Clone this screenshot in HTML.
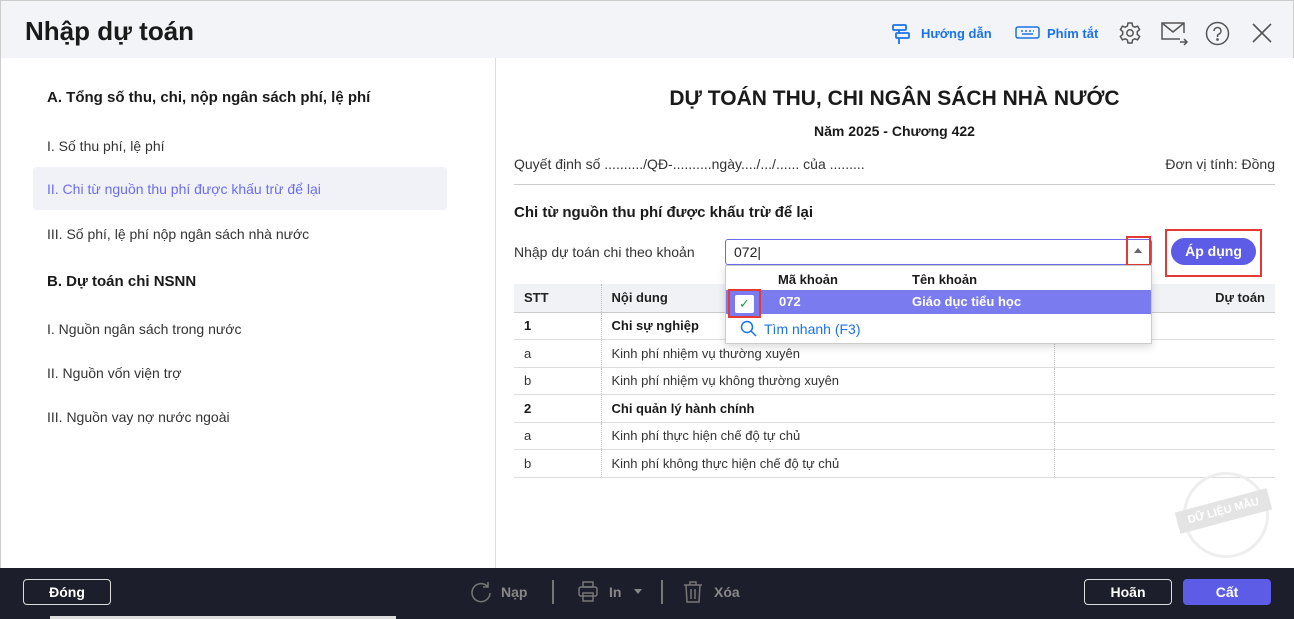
<!DOCTYPE html>
<html><head><meta charset="utf-8"><style>
*{box-sizing:border-box;margin:0;padding:0}
body{width:1294px;height:619px;overflow:hidden;font-family:"Liberation Sans",sans-serif;color:#222;background:#fff;position:relative;font-size:14px}
.abs{position:absolute}
.top{left:0;top:0;width:1294px;height:58px;background:#f3f4f8;border:1px solid #ccc;border-bottom:none}
.title{left:25px;top:16px;font-size:26px;font-weight:bold;color:#1a1a1a}
.blue{color:#1a73e8;font-size:13px;font-weight:bold}
.left{left:0;top:58px;width:496px;height:510px;border-right:1px solid #ddd;border-left:1px solid #ccc}
.li{position:absolute;left:47px;font-size:15px;color:#333}
.b{font-weight:bold;color:#1a1a1a}
.sel{left:33px;top:167px;width:414px;height:43px;background:#f1f2f8;border-radius:4px}
table{border-collapse:collapse;position:absolute;left:514px;top:284px;width:761px;font-size:13px}
td{height:27.5px;padding-left:10px;border-bottom:1px solid #ddd;color:#333}
th{height:28px;background:#f1f2f6;text-align:left;padding-left:10px;font-weight:bold;border-bottom:1px solid #ccc}
td:nth-child(2),th:nth-child(2){border-left:1px dotted #bbb}
td:nth-child(3),th:nth-child(3){border-left:1px dotted #bbb}
tr.bd td{font-weight:bold;color:#1a1a1a}
.bottom{left:0;top:568px;width:1294px;height:51px;background:#1c1e2b}
.btn{position:absolute;height:26px;border:1px solid #ddd;border-radius:4px;color:#fff;font-weight:bold;font-size:14px;text-align:center;line-height:24px}
.grey{color:#888;font-weight:bold;font-size:14px}
</style></head><body>
<div class="abs top"></div>
<div class="abs title">Nhập dự toán</div>
<svg class="abs" style="left:891px;top:23px" width="20" height="22" viewBox="0 0 20 22" fill="none" stroke="#1a73e8" stroke-width="1.8"><rect x="2" y="2" width="13" height="5" rx="1"/><rect x="5" y="10" width="13" height="5" rx="1"/><path d="M8 15v6M8 7v3"/></svg>
<div class="abs blue" style="left:921px;top:26px">Hướng dẫn</div>
<svg class="abs" style="left:1015px;top:26px" width="25" height="13" viewBox="0 0 25 13" fill="none" stroke="#1a73e8" stroke-width="1.5"><rect x="1" y="1" width="23" height="11" rx="2"/><path d="M6 5h2M10 5h2M14 5h2M18 5h1M7 8h11"/></svg>
<div class="abs blue" style="left:1047px;top:26px">Phím tắt</div>
<svg class="abs" style="left:1118px;top:21px" width="24" height="24" viewBox="0 0 24 24" fill="none" stroke="#555" stroke-width="1.5"><circle cx="12" cy="12" r="3.2"/><path d="M10 2h4l.6 3 2.2 1.2 2.8-1 2 3.4-2.3 2v2.8l2.3 2-2 3.4-2.8-1-2.2 1.2-.6 3h-4l-.6-3-2.2-1.2-2.8 1-2-3.4 2.3-2v-2.8l-2.3-2 2-3.4 2.8 1 2.2-1.2z"/></svg>
<svg class="abs" style="left:1161px;top:22px" width="28" height="24" viewBox="0 0 28 24" fill="none" stroke="#555" stroke-width="1.5"><path d="M19 17H1V1h22v10"/><path d="M1 1l11 9 11-9"/><path d="M19 20h7M23 17l3 3-3 3"/></svg>
<svg class="abs" style="left:1205px;top:21px" width="25" height="25" viewBox="0 0 25 25" fill="none" stroke="#555" stroke-width="1.5"><circle cx="12.5" cy="12.5" r="11"/><path d="M9 10a3.5 3.5 0 1 1 4.5 3.3c-.8.3-1 .8-1 1.7v1"/><circle cx="12.5" cy="18.5" r=".6" fill="#555"/></svg>
<svg class="abs" style="left:1252px;top:23px" width="20" height="20" viewBox="0 0 20 20" stroke="#555" stroke-width="1.6"><path d="M1 1l18 18M19 1L1 19"/></svg>

<div class="abs left"></div>
<div class="abs sel"></div>
<div class="li b" style="top:89px">A. Tổng số thu, chi, nộp ngân sách phí, lệ phí</div>
<div class="li" style="top:138px;font-size:14px">I. Số thu phí, lệ phí</div>
<div class="li" style="top:181px;font-size:14px;color:#6c6cf0">II. Chi từ nguồn thu phí được khấu trừ để lại</div>
<div class="li" style="top:226px;font-size:14px">III. Số phí, lệ phí nộp ngân sách nhà nước</div>
<div class="li b" style="top:273px">B. Dự toán chi NSNN</div>
<div class="li" style="top:321px;font-size:14px">I. Nguồn ngân sách trong nước</div>
<div class="li" style="top:365px;font-size:14px">II. Nguồn vốn viện trợ</div>
<div class="li" style="top:409px;font-size:14px">III. Nguồn vay nợ nước ngoài</div>

<div class="abs b" style="left:514px;width:761px;top:87px;text-align:center;font-size:21px">DỰ TOÁN THU, CHI NGÂN SÁCH NHÀ NƯỚC</div>
<div class="abs b" style="left:514px;width:761px;top:123px;text-align:center;font-size:14px">Năm 2025 - Chương 422</div>
<div class="abs" style="left:514px;top:156px;font-size:14px;color:#333">Quyết định số ........../QĐ-..........ngày..../.../...... của .........</div>
<div class="abs" style="right:19px;top:156px;font-size:14px;color:#333">Đơn vị tính: Đồng</div>
<div class="abs" style="left:514px;top:184px;width:761px;border-top:1px solid #ccc"></div>
<div class="abs b" style="left:514px;top:204px;font-size:15px">Chi từ nguồn thu phí được khấu trừ để lại</div>
<div class="abs" style="left:514px;top:244px;font-size:14px;color:#333">Nhập dự toán chi theo khoản</div>

<table>
<tr><th style="width:87px">STT</th><th style="width:453px">Nội dung</th><th style="text-align:right;padding-right:10px">Dự toán</th></tr>
<tr class="bd"><td>1</td><td>Chi sự nghiệp</td><td></td></tr>
<tr><td>a</td><td>Kinh phí nhiệm vụ thường xuyên</td><td></td></tr>
<tr><td>b</td><td>Kinh phí nhiệm vụ không thường xuyên</td><td></td></tr>
<tr class="bd"><td>2</td><td>Chi quản lý hành chính</td><td></td></tr>
<tr><td>a</td><td>Kinh phí thực hiện chế độ tự chủ</td><td></td></tr>
<tr><td>b</td><td>Kinh phí không thực hiện chế độ tự chủ</td><td></td></tr>
</table>

<div class="abs" style="left:725px;top:239px;width:427px;height:26px;border:1px solid #6c6cf0;border-radius:3px;background:#fff;padding:4px 8px;font-size:14px">072|</div>
<div class="abs" style="left:1126px;top:236px;width:25px;height:30px;border:2px solid #e53935"></div>
<div class="abs" style="left:1134px;top:248px;width:0;height:0;border-left:4px solid transparent;border-right:4px solid transparent;border-bottom:5px solid #666"></div>
<div class="abs" style="left:1165px;top:229px;width:97px;height:48px;border:2px solid #e53935"></div>
<div class="abs" style="left:1171px;top:238px;width:85px;height:27px;border-radius:14px;background:#5c5ce6;color:#fff;font-weight:bold;text-align:center;line-height:27px;font-size:14px">Áp dụng</div>

<div class="abs" style="left:725px;top:265px;width:427px;height:79px;background:#fff;border:1px solid #ccc;box-shadow:0 3px 8px rgba(0,0,0,.15)">
<div class="abs b" style="left:52px;top:6px;font-size:13px">Mã khoản</div>
<div class="abs b" style="left:186px;top:6px;font-size:13px">Tên khoản</div>
<div class="abs" style="left:0;top:24px;width:425px;height:24px;background:#7b7bf0"></div>
<div class="abs" style="left:2px;top:23px;width:33px;height:29px;border:2px solid #e53935;background:#7b7bf0"></div>
<div class="abs" style="left:9px;top:29px;width:19px;height:18px;background:#fff;border-radius:2px;color:#1a9e3a;font-size:13px;text-align:center;line-height:18px">✓</div>
<div class="abs" style="left:53px;top:28px;color:#fff;font-weight:bold;font-size:13px">072</div>
<div class="abs" style="left:186px;top:28px;color:#fff;font-weight:bold;font-size:13px">Giáo dục tiểu học</div>
<svg class="abs" style="left:14px;top:54px" width="17" height="17" viewBox="0 0 17 17" fill="none" stroke="#1a73e8" stroke-width="1.5"><circle cx="7" cy="7" r="5.5"/><path d="M11 11l5 5"/></svg>
<div class="abs" style="left:38px;top:55px;color:#1a73e8;font-size:14px">Tìm nhanh (F3)</div>
</div>

<div class="abs" style="left:1183px;top:472px;width:86px;height:86px;border:3px solid #eee;border-radius:50%"></div>
<div class="abs" style="left:1176px;top:500px;width:95px;height:22px;background:#e4e4e4;color:#fff;font-weight:bold;font-size:11px;text-align:center;line-height:22px;transform:rotate(-15deg)">DỮ LIỆU MẪU</div>

<div class="abs bottom"></div>
<div class="btn" style="left:23px;top:579px;width:88px">Đóng</div>
<svg class="abs" style="left:470px;top:581px" width="22" height="22" viewBox="0 0 22 22" fill="none" stroke="#777" stroke-width="1.5"><path d="M18 6A9 9 0 1 0 20 12M18 1v5h-5"/></svg>
<div class="abs grey" style="left:501px;top:584px">Nạp</div>
<div class="abs" style="left:552px;top:580px;width:2px;height:24px;background:#777"></div>
<svg class="abs" style="left:578px;top:581px" width="20" height="22" viewBox="0 0 20 22" fill="none" stroke="#777" stroke-width="1.5"><rect x="5" y="1" width="10" height="5"/><rect x="1" y="6" width="18" height="9" rx="2"/><rect x="5" y="12" width="10" height="8"/></svg>
<div class="abs grey" style="left:609px;top:584px">In</div>
<div class="abs" style="left:634px;top:589px;border-left:4px solid transparent;border-right:4px solid transparent;border-top:5px solid #888"></div>
<div class="abs" style="left:661px;top:580px;width:2px;height:24px;background:#777"></div>
<svg class="abs" style="left:683px;top:580px" width="20" height="24" viewBox="0 0 20 24" fill="none" stroke="#777" stroke-width="1.5"><path d="M1 5h18M7 5V2h6v3M3 5l1 17h12l1-17M8 9v10M12 9v10"/></svg>
<div class="abs grey" style="left:714px;top:584px">Xóa</div>
<div class="btn" style="left:1084px;top:579px;width:88px">Hoãn</div>
<div class="btn" style="left:1183px;top:579px;width:88px;background:#5c5ce6;border-color:#5c5ce6">Cất</div>
<div class="abs" style="left:50px;top:616px;width:346px;height:3px;background:#ddd"></div>
</body></html>
